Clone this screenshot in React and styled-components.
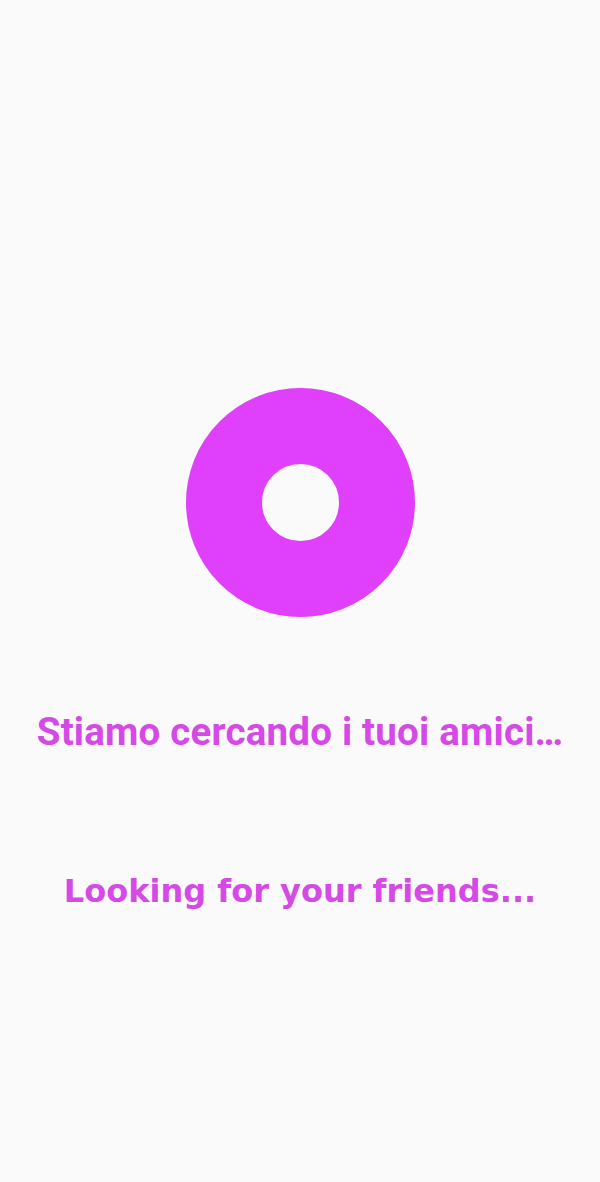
import React from "react";
import styled, { createGlobalStyle } from "styled-components";

const GlobalStyle = createGlobalStyle`
  html, body {
    margin: 0;
    padding: 0;
    background: #fafafa;
  }
`;

const Screen = styled.main`
  width: 600px;
  height: 1182px;
  display: flex;
  flex-direction: column;
  align-items: center;
  padding-top: 388px;
  box-sizing: border-box;
  background: #fafafa;
`;

const Ring = styled.div`
  width: 229px;
  height: 229px;
  box-sizing: border-box;
  border-radius: 50%;
  border: 76.5px solid #e040fb;
`;

const Message = styled.p`
  margin: ${(p) => p.$top}px 0 0;
  font-family: ${(p) => p.$font};
  font-weight: 700;
  font-size: ${(p) => p.$size}px;
  letter-spacing: ${(p) => p.$spacing || 0}px;
  line-height: 1;
  color: #d54ae6;
  white-space: nowrap;
`;

export default function App() {
  return (
    <>
      <GlobalStyle />
      <Screen>
        <Ring />
        <Message $top={96} $size={38.5} $spacing={0.2} $font={`Roboto, "Noto Sans", sans-serif`}>
          Stiamo cercando i tuoi amici…
        </Message>
        <Message $top={123} $size={32} $font={`"DejaVu Sans", sans-serif`}>
          Looking for your friends...
        </Message>
      </Screen>
    </>
  );
}
